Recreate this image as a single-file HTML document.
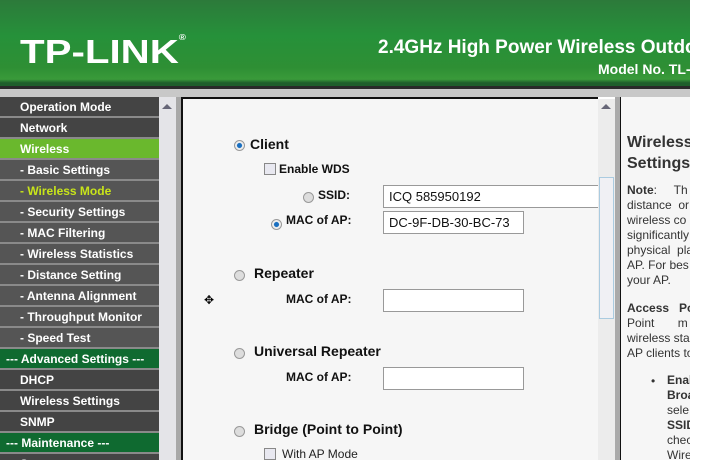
<!DOCTYPE html>
<html><head><meta charset="utf-8"><style>
*{margin:0;padding:0;box-sizing:border-box}
body{width:717px;height:460px;overflow:hidden;background:#fff;font-family:"Liberation Sans",Arial,sans-serif;position:relative}
.hdr{position:absolute;left:0;top:0;width:690px;height:90px;background:linear-gradient(180deg,#2c7a3a 0%,#26913a 40%,#2e8f34 75%,#3a9a3a 88%,#1f5f2c 92%);}
.hdr:after{content:"";position:absolute;left:0;top:86px;width:690px;height:3px;background:#2a2a2a}
.band{position:absolute;left:0;top:89px;width:690px;height:8px;background:#c8c8c8}
.logo{position:absolute;left:20px;top:33px;color:#fff;font-weight:bold;font-size:33px;letter-spacing:0px;transform:scaleX(1.22);transform-origin:left}
.t1{position:absolute;left:378px;top:37px;color:#fff;font-weight:bold;font-size:19px;white-space:nowrap;width:312px;overflow:hidden}
.t2{position:absolute;left:598px;top:61px;color:#fff;font-weight:bold;font-size:14px;white-space:nowrap;width:92px;overflow:hidden}
.menu{position:absolute;left:0;top:97px;width:159px;height:363px;overflow:hidden}
.menu div{height:21px;border-bottom:2px solid #8a8a8a;color:#fff;font-weight:bold;font-size:12px;line-height:20px;padding-left:20px;background:#444}
.menu .s{background:#555}
.menu .g{background:#6ab82d}
.menu .a{background:#0f6a30;padding-left:6px}
.menu .y{color:#c8e41a}
.sb1{position:absolute;left:159px;top:97px;width:17px;height:363px;background:#e4e4e8}
.sb1b{position:absolute;left:176px;top:97px;width:5px;height:363px;background:#a8a8a8}
.cont{position:absolute;left:181px;top:97px;width:417px;height:363px;background:#f6f6f6;border-left:2px solid #111;border-top:2px solid #111}
.sb2{position:absolute;left:598px;top:99px;width:17px;height:361px;background:#ececec}
.thumb{position:absolute;left:599px;top:177px;width:15px;height:142px;border:1px solid #aacbe0;background:#f0f0f4}
.div{position:absolute;left:615px;top:97px;width:6px;height:363px;background:#aaa;border-right:1px solid #111}
.help{position:absolute;left:621px;top:97px;width:69px;height:363px;background:#f6f6f6;overflow:hidden;font-size:12px;color:#333;white-space:nowrap}
.lbl{position:absolute;font-weight:bold;font-size:12px;color:#111}
.big{position:absolute;font-weight:bold;font-size:14px;color:#111}
.rad{position:absolute;width:11px;height:11px;border-radius:50%;border:1px solid #999;background:#ddd}
.rad.on{background:radial-gradient(circle,#1a6fc0 35%,#eee 45%)}
.cb{position:absolute;width:12px;height:12px;border:1px solid #888;background:#e8e8f0}
.inp{position:absolute;height:23px;border:1px solid #999;background:#fff;font-size:13px;padding-left:5px;line-height:21px;color:#111}
.arr{position:absolute;width:0;height:0;border-left:5px solid transparent;border-right:5px solid transparent;border-bottom:5px solid #667}
</style></head><body>
<div class="hdr"></div><div class="band"></div>
<div class="logo">TP-LINK<span style="font-size:8px;vertical-align:top">®</span></div>
<div class="t1">2.4GHz High Power Wireless Outdoor</div>
<div class="t2">Model No. TL-WA</div>
<div class="menu">
<div>Operation Mode</div><div>Network</div><div class="g">Wireless</div>
<div class="s">- Basic Settings</div><div class="s y">- Wireless Mode</div><div class="s">- Security Settings</div>
<div class="s">- MAC Filtering</div><div class="s">- Wireless Statistics</div><div class="s">- Distance Setting</div>
<div class="s">- Antenna Alignment</div><div class="s">- Throughput Monitor</div><div class="s">- Speed Test</div>
<div class="a">--- Advanced Settings ---</div><div>DHCP</div><div>Wireless Settings</div><div>SNMP</div>
<div class="a">--- Maintenance ---</div><div>System</div>
</div>
<div class="sb1"></div><div class="arr" style="left:162px;top:104px"></div><div class="sb1b"></div>
<div class="cont"></div>
<div class="rad on" style="left:234px;top:140px"></div><div class="big" style="left:250px;top:136px">Client</div>
<div class="cb" style="left:264px;top:163px"></div><div class="lbl" style="left:279px;top:162px">Enable WDS</div>
<div class="rad" style="left:303px;top:192px"></div><div class="lbl" style="left:318px;top:188px">SSID:</div>
<div class="inp" style="left:383px;top:185px;width:215px;border-right:none">ICQ 585950192</div>
<div class="rad on" style="left:271px;top:219px"></div><div class="lbl" style="left:286px;top:213px">MAC of AP:</div>
<div class="inp" style="left:383px;top:211px;width:141px">DC-9F-DB-30-BC-73</div>
<div class="rad" style="left:234px;top:270px"></div><div class="big" style="left:254px;top:265px">Repeater</div>
<div class="lbl" style="left:286px;top:292px">MAC of AP:</div><div class="inp" style="left:383px;top:289px;width:141px"></div>
<div style="position:absolute;left:204px;top:293px;font-size:12px">✥</div>
<div class="rad" style="left:234px;top:348px"></div><div class="big" style="left:254px;top:343px">Universal Repeater</div>
<div class="lbl" style="left:286px;top:370px">MAC of AP:</div><div class="inp" style="left:383px;top:367px;width:141px"></div>
<div class="rad" style="left:234px;top:426px"></div><div class="big" style="left:254px;top:421px">Bridge (Point to Point)</div>
<div class="cb" style="left:264px;top:448px"></div><div style="position:absolute;left:282px;top:447px;font-size:12px;color:#222">With AP Mode</div>
<div class="sb2"></div><div class="arr" style="left:601px;top:104px"></div><div class="thumb"></div>
<div class="div"></div>
<div class="help">
<div style="position:absolute;left:6px;top:35px;font-weight:bold;font-size:16px;line-height:21px;color:#333">Wireless<br>Settings</div>
<div style="position:absolute;left:6px;top:86px;line-height:15px"><b>Note</b>:&nbsp;&nbsp;&nbsp;&nbsp;&nbsp;Th<br>distance&nbsp;&nbsp;or<br>wireless&nbsp;co<br>significantly<br>physical&nbsp;&nbsp;pla<br>AP. For bes<br>your AP.</div>
<div style="position:absolute;left:6px;top:204px;line-height:15px"><b>Access&nbsp;&nbsp;&nbsp;Po</b><br>Point&nbsp;&nbsp;&nbsp;&nbsp;&nbsp;&nbsp;&nbsp;m<br>wireless sta<br>AP clients to</div>
<div style="position:absolute;left:30px;top:277px">•</div>
<div style="position:absolute;left:46px;top:276px;line-height:15px"><b>Enab</b><br><b>Broa</b><br>sele<br><b>SSID</b><br>chec<br>Wire</div>
</div>
</body></html>
